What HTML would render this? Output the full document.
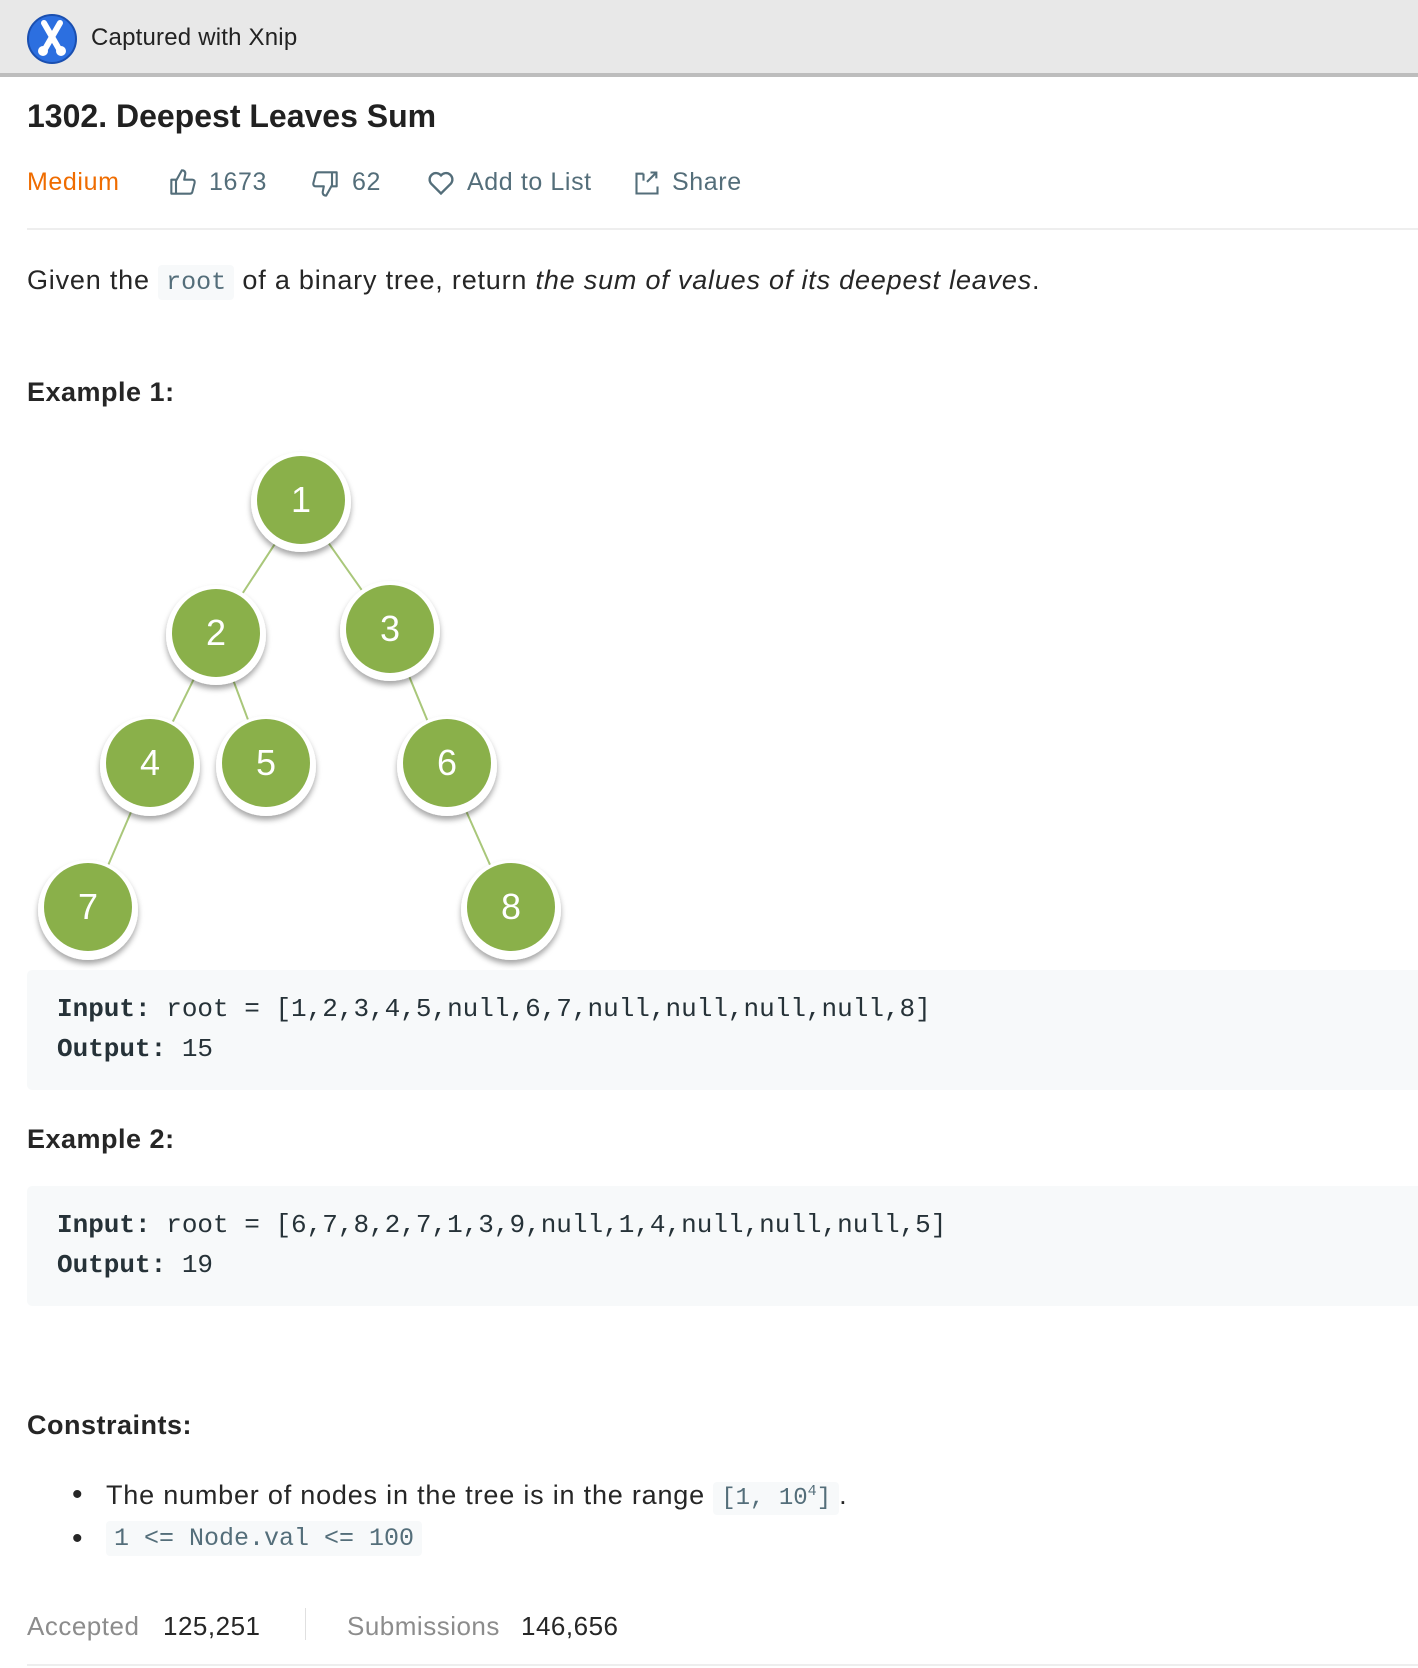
<!DOCTYPE html>
<html><head><meta charset="utf-8"><style>
*{margin:0;padding:0;box-sizing:border-box}
body{width:1418px;height:1668px;background:#fff;font-family:"Liberation Sans",sans-serif;color:#262626;position:relative;overflow:hidden}
.a{position:absolute;white-space:nowrap}
.hdr{position:absolute;left:0;top:0;width:1418px;height:77px;background:#e8e8e8;border-bottom:4px solid #bdbdbd}
.meta{font-size:25px;letter-spacing:0.6px;color:#546e7a;top:168px}
.pre{position:absolute;left:27px;width:1391px;background:#f7f9fa;border-radius:5px 0 0 5px}
.pre div{position:absolute;left:30px;font-family:"Liberation Mono",monospace;font-size:26px;letter-spacing:0;color:#263238}
code{font-family:"Liberation Mono",monospace;background:#f7f9fa;border-radius:4px;color:#546e7a;padding:3px 8px;letter-spacing:0}
.t{font-size:27px;letter-spacing:0.8px}
</style></head><body>
<div class="hdr"></div>
<svg class="a" style="left:26px;top:13px" width="52" height="52" viewBox="0 0 52 52"><circle cx="26" cy="26" r="24" fill="#2c6fe0"/><circle cx="26" cy="26" r="24" fill="none" stroke="#1a4fb0" stroke-width="2"/><path d="M18 10 L33 36 M34 10 L19 36" stroke="#fff" stroke-width="6" stroke-linecap="round"/><circle cx="17" cy="38" r="5" fill="#fff"/><circle cx="35" cy="38" r="5" fill="#fff"/></svg>
<div class="a" style="left:91px;top:24px;font-size:24px;letter-spacing:0.2px;color:#222">Captured with Xnip</div>
<div class="a" style="left:27px;top:98px;font-size:32px;font-weight:bold;color:#212121">1302. Deepest Leaves Sum</div>
<div class="a meta" style="left:27px;color:#ef6c00">Medium</div>
<svg class="a" style="left:169px;top:168px" width="28" height="28" viewBox="0 0 24 24" fill="none" stroke="#546e7a" stroke-width="1.8" stroke-linejoin="round"><path d="M2 10h4v12H2z M6 11l5-9c2 0 3 1 3 3l-1 5h7c1.5 0 2.3 1.2 2 2.5l-2 8c-.3 1-1 1.5-2 1.5H6"/></svg>
<div class="a meta" style="left:209px">1673</div>
<svg class="a" style="left:311px;top:170px" width="28" height="28" viewBox="0 0 24 24" fill="none" stroke="#546e7a" stroke-width="1.8" stroke-linejoin="round"><path d="M22 14h-4V2h4z M18 13l-5 9c-2 0-3-1-3-3l1-5H4c-1.5 0-2.3-1.2-2-2.5l2-8C4.3 2.5 5 2 6 2h12"/></svg>
<div class="a meta" style="left:352px">62</div>
<svg class="a" style="left:427px;top:170px" width="28" height="26" viewBox="0 0 24 22" fill="none" stroke="#546e7a" stroke-width="2"><path d="M12 20 L3.5 11.5 A5 5 0 0 1 12 4.5 A5 5 0 0 1 20.5 11.5 Z"/></svg>
<div class="a meta" style="left:467px">Add to List</div>
<svg class="a" style="left:633px;top:169px" width="28" height="28" viewBox="0 0 24 24" fill="none" stroke="#546e7a" stroke-width="1.8"><path d="M9 4H3v17h18v-6 M15 3h5v5 M20 3l-8 8 M9 4v6"/></svg>
<div class="a meta" style="left:672px">Share</div>
<div class="a" style="left:27px;top:228px;width:1391px;height:2px;background:#eee"></div>
<div class="a t" style="left:27px;top:265px">Given the <code style="font-size:25px">root</code> of a binary tree, return <i>the sum of values of its deepest leaves</i>.</div>
<div class="a" style="left:27px;top:377px;font-size:27px;letter-spacing:0.5px;font-weight:bold">Example 1:</div>
<svg class="a" style="left:0;top:440px" width="600" height="530" viewBox="0 440 600 530">
<g stroke="#a9c77a" stroke-width="2"><line x1="301" y1="504" x2="216" y2="634"/><line x1="301" y1="504" x2="390" y2="630"/><line x1="216" y1="634" x2="150" y2="768"/><line x1="216" y1="634" x2="266" y2="768"/><line x1="390" y1="630" x2="447" y2="768"/><line x1="150" y1="768" x2="88" y2="912"/><line x1="447" y1="768" x2="511" y2="912"/></g>
<defs><filter id="s" x="-30%" y="-30%" width="160%" height="160%"><feDropShadow dx="0" dy="4" stdDeviation="3" flood-color="#000" flood-opacity="0.35"/></filter></defs>
<g font-family="Liberation Sans,sans-serif" font-size="36" fill="#fff" text-anchor="middle">
<g filter="url(#s)" fill="#fff"><circle cx="301" cy="502" r="50"/><circle cx="216" cy="635" r="50"/><circle cx="390" cy="631" r="50"/><circle cx="150" cy="766" r="50"/><circle cx="266" cy="766" r="50"/><circle cx="447" cy="766" r="50"/><circle cx="88" cy="910" r="50"/><circle cx="511" cy="910" r="50"/></g>
<g fill="#8ab04a"><circle cx="301" cy="500" r="44"/><circle cx="216" cy="633" r="44"/><circle cx="390" cy="629" r="44"/><circle cx="150" cy="763" r="44"/><circle cx="266" cy="763" r="44"/><circle cx="447" cy="763" r="44"/><circle cx="88" cy="907" r="44"/><circle cx="511" cy="907" r="44"/></g>
<text x="301" y="512">1</text><text x="216" y="645">2</text><text x="390" y="641">3</text><text x="150" y="775">4</text><text x="266" y="775">5</text><text x="447" y="775">6</text><text x="88" y="919">7</text><text x="511" y="919">8</text></g>
</svg>
<div class="pre" style="top:970px;height:120px"><div style="top:24px"><b>Input:</b> root = [1,2,3,4,5,null,6,7,null,null,null,null,8]</div><div style="top:64px"><b>Output:</b> 15</div></div>
<div class="a" style="left:27px;top:1124px;font-size:27px;letter-spacing:0.5px;font-weight:bold">Example 2:</div>
<div class="pre" style="top:1186px;height:120px"><div style="top:24px"><b>Input:</b> root = [6,7,8,2,7,1,3,9,null,1,4,null,null,null,5]</div><div style="top:64px"><b>Output:</b> 19</div></div>
<div class="a" style="left:27px;top:1410px;font-size:27px;letter-spacing:0.5px;font-weight:bold">Constraints:</div>
<div class="a" style="left:72px;top:1478px;font-size:30px">•</div>
<div class="a t" style="left:106px;top:1480px">The number of nodes in the tree is in the range <code style="font-size:24px">[1, 10<sup style="font-size:15px">4</sup>]</code>.</div>
<div class="a" style="left:72px;top:1522px;font-size:30px">•</div>
<div class="a" style="left:106px;top:1523px;font-size:25px"><code>1 &lt;= Node.val &lt;= 100</code></div>
<div class="a" style="left:27px;top:1611px;font-size:26px;letter-spacing:0.5px;color:#8c8c8c">Accepted</div>
<div class="a" style="left:163px;top:1611px;font-size:26px;letter-spacing:0.5px">125,251</div>
<div class="a" style="left:305px;top:1608px;width:1px;height:32px;background:#e0e0e0"></div>
<div class="a" style="left:347px;top:1611px;font-size:26px;letter-spacing:0.5px;color:#8c8c8c">Submissions</div>
<div class="a" style="left:521px;top:1611px;font-size:26px;letter-spacing:0.5px">146,656</div>
<div class="a" style="left:27px;top:1664px;width:1391px;height:2px;background:#eee"></div>
</body></html>
